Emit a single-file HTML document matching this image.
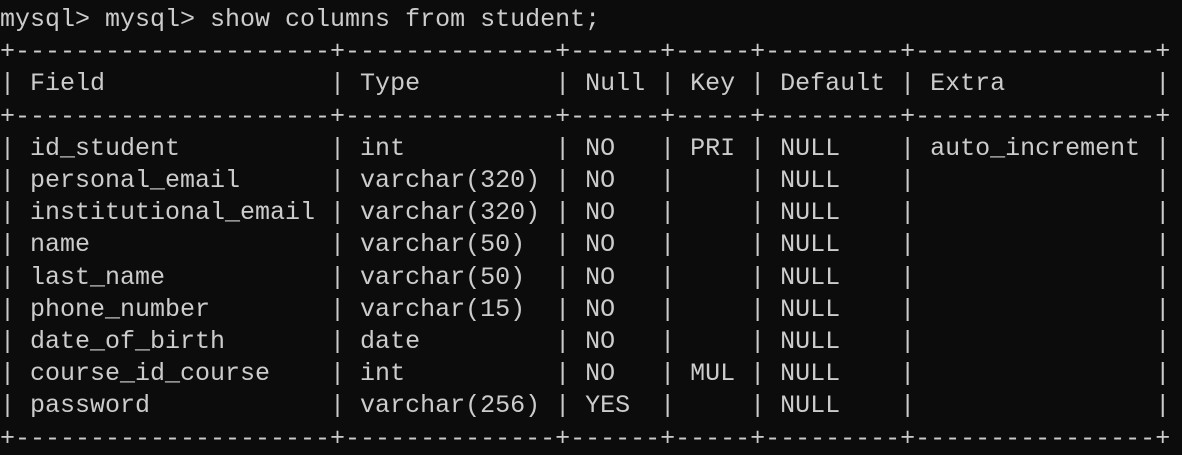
<!DOCTYPE html>
<html><head><meta charset="utf-8"><style>
html,body{margin:0;padding:0;background:#0c0c0c;width:1182px;height:448px;overflow:hidden}
pre{margin:0;position:absolute;left:0;top:4px;font-family:"Liberation Mono",monospace;font-size:25px;line-height:32.2px;color:#cccccc;white-space:pre}
</style></head><body><pre>mysql&gt; mysql&gt; show columns from student;
+---------------------+--------------+------+-----+---------+----------------+
| Field               | Type         | Null | Key | Default | Extra          |
+---------------------+--------------+------+-----+---------+----------------+
| id_student          | int          | NO   | PRI | NULL    | auto_increment |
| personal_email      | varchar(320) | NO   |     | NULL    |                |
| institutional_email | varchar(320) | NO   |     | NULL    |                |
| name                | varchar(50)  | NO   |     | NULL    |                |
| last_name           | varchar(50)  | NO   |     | NULL    |                |
| phone_number        | varchar(15)  | NO   |     | NULL    |                |
| date_of_birth       | date         | NO   |     | NULL    |                |
| course_id_course    | int          | NO   | MUL | NULL    |                |
| password            | varchar(256) | YES  |     | NULL    |                |
+---------------------+--------------+------+-----+---------+----------------+</pre></body></html>
